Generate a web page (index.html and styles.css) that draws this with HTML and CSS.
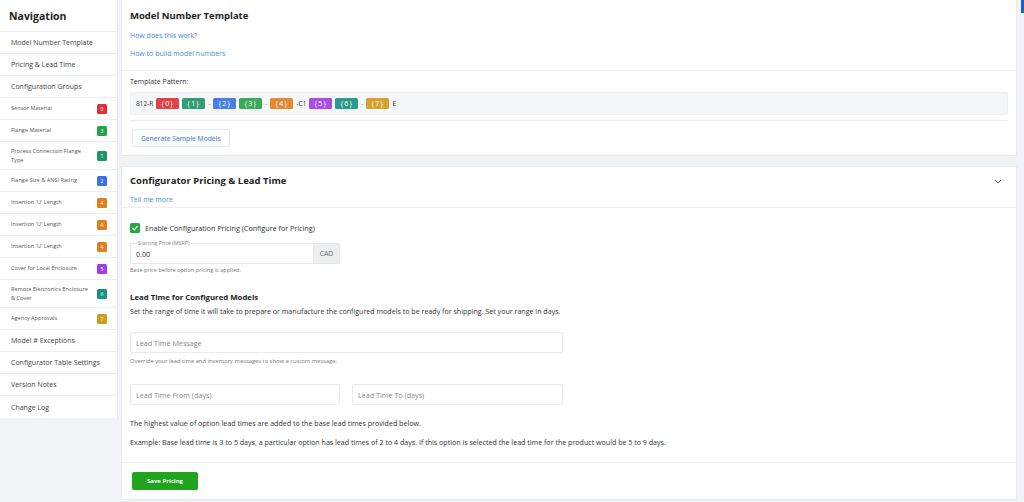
FILE: index.html
```html
<!DOCTYPE html>
<html>
<head>
<meta charset="utf-8">
<link rel="stylesheet" href="styles.css">
</head>
<body>
<div class="page">
  <aside class="sidebar">
    <div class="nav-title">Navigation</div>
    <div class="nav-item">Model Number Template</div>
    <div class="nav-item">Pricing &amp; Lead Time</div>
    <div class="nav-item">Configuration Groups</div>
    <div class="nav-sub"><span>Sensor Material</span><span class="badge red">0</span></div>
    <div class="nav-sub"><span>Flange Material</span><span class="badge green">3</span></div>
    <div class="nav-sub tall"><span>Process Connection Flange Type</span><span class="badge dgreen">1</span></div>
    <div class="nav-sub"><span>Flange Size &amp; ANSI Rating</span><span class="badge blue">2</span></div>
    <div class="nav-sub"><span>Insertion 'U' Length</span><span class="badge orange">4</span></div>
    <div class="nav-sub"><span>Insertion 'U' Length</span><span class="badge orange">4</span></div>
    <div class="nav-sub"><span>Insertion 'U' Length</span><span class="badge orange">4</span></div>
    <div class="nav-sub"><span>Cover for Local Enclosure</span><span class="badge purple">5</span></div>
    <div class="nav-sub tall"><span>Remote Electronics Enclosure &amp; Cover</span><span class="badge teal">6</span></div>
    <div class="nav-sub"><span>Agency Approvals</span><span class="badge gold">7</span></div>
    <div class="nav-item">Model # Exceptions</div>
    <div class="nav-item">Configurator Table Settings</div>
    <div class="nav-item">Version Notes</div>
    <div class="nav-item last">Change Log</div>
  </aside>

  <main class="main">
    <section class="card">
      <div class="card-head">
        <h2 class="card-title">Model Number Template</h2>
        <div class="links">
          <a class="link">How does this work?</a>
          <a class="link">How to build model numbers</a>
        </div>
      </div>
      <div class="card-body">
        <div class="label">Template Pattern:</div>
        <div class="pattern">
          <span class="lit">812-R</span>
          <span class="chip red">{0}</span>
          <span class="chip dgreen">{1}</span>
          <span class="dash">-</span>
          <span class="chip blue">{2}</span>
          <span class="chip green">{3}</span>
          <span class="dash">-</span>
          <span class="chip orange">{4}</span>
          <span class="lit">-C1</span>
          <span class="chip purple">{5}</span>
          <span class="chip teal">{6}</span>
          <span class="dash">-</span>
          <span class="chip gold">{7}</span>
          <span class="lit">E</span>
        </div>
        <div class="rule"></div>
        <div class="btn-row"><button class="btn-outline">Generate Sample Models</button></div>
      </div>
    </section>

    <section class="card">
      <div class="card-head head2">
        <div class="title-row">
          <h2 class="card-title">Configurator Pricing &amp; Lead Time</h2>
          <svg class="chev" width="8" height="5" viewBox="0 0 8 5"><path d="M1 1 L4 4 L7 1" fill="none" stroke="#555" stroke-width="1"/></svg>
        </div>
        <a class="link tell">Tell me more</a>
      </div>
      <div class="card-body body2">
        <label class="check-row">
          <span class="checkbox"><svg width="8" height="8" viewBox="0 0 8 8"><path d="M1.5 4.2 L3.2 5.9 L6.6 2.2" fill="none" stroke="#fff" stroke-width="1.2"/></svg></span>
          <span>Enable Configuration Pricing (Configure for Pricing)</span>
        </label>
        <div class="price-group">
          <div class="price-input">
            <span class="float-label">Starting Price (MSRP)</span>
            <span class="price-val">0.00</span>
          </div>
          <div class="addon">CAD</div>
        </div>
        <div class="help">Base price before option pricing is applied.</div>

        <h3 class="sub-title">Lead Time for Configured Models</h3>
        <p class="text desc">Set the range of time it will take to prepare or manufacture the configured models to be ready for shipping. Set your range in days.</p>

        <div class="field wide">Lead Time Message</div>
        <div class="help help2">Override your lead time and inventory messages to show a custom message.</div>

        <div class="two-fields">
          <div class="field">Lead Time From (days)</div>
          <div class="field">Lead Time To (days)</div>
        </div>

        <p class="text note1">The highest value of option lead times are added to the base lead times provided below.</p>
        <p class="text note2">Example: Base lead time is 3 to 5 days, a particular option has lead times of 2 to 4 days. If this option is selected the lead time for the product would be 5 to 9 days.</p>
      </div>
      <div class="card-foot">
        <button class="btn-green">Save Pricing</button>
      </div>
    </section>
  </main>
  <div class="scroll-thumb"></div>
</div>
</body>
</html>
```

FILE: styles.css
```css
* { box-sizing: border-box; }
html, body { margin: 0; padding: 0; }
body {
  background: #f1f3f6;
  font-family: "Open Sans", "Liberation Sans", sans-serif;
  color: #333;
  width: 1024px;
  height: 502px;
  overflow: hidden;
}
.page {
  display: flex;
  align-items: flex-start;
  gap: 3px;
  padding-right: 7px;
  position: relative;
  height: 502px;
}

/* Sidebar */
.sidebar {
  width: 118px;
  flex: 0 0 118px;
  background: #fff;
  border-right: 1px solid #e9ecef;
}
.nav-title {
  height: 32px;
  padding: 0 9px;
  display: flex;
  align-items: center;
  font-weight: 700;
  font-size: 10.5px;
  color: #222;
  border-bottom: 1px solid #eceef0;
}
.nav-item {
  height: 22px;
  padding: 0 11px;
  display: flex;
  align-items: center;
  font-size: 7px;
  color: #444;
  border-bottom: 1px solid #eceef0;
  white-space: nowrap;
}
.nav-item.last { border-bottom: none; }
.nav-sub {
  min-height: 22px;
  padding: 0 10px 0 11px;
  display: flex;
  align-items: center;
  justify-content: space-between;
  font-size: 5.6px;
  color: #555;
  border-bottom: 1px solid #eceef0;
}
.nav-sub span:first-child { line-height: 9px; padding-right: 4px; }
.nav-sub.tall { min-height: 28px; }
.badge {
  flex: 0 0 10px;
  width: 10px;
  height: 10px;
  border-radius: 1.5px;
  color: #fff;
  font-size: 5px;
  display: flex;
  align-items: center;
  justify-content: center;
}
.red { background: #dc3038; }
.green { background: #28a14a; }
.dgreen { background: #1f946b; }
.blue { background: #3574e3; }
.orange { background: #e07f1f; }
.purple { background: #a03ee0; }
.teal { background: #15917f; }
.gold { background: #d29a1c; }

/* Main */
.main {
  flex: 1;
  display: flex;
  flex-direction: column;
  gap: 10px;
}
.card {
  background: #fff;
  border: 1px solid #e8eaed;
  border-top: none;
}
.card + .card { border-top: 1px solid #e8eaed; }
.card-head {
  padding: 8px 8px 7px;
  border-bottom: 1px solid #eceef0;
}
.card-title {
  margin: 0;
  font-size: 9.5px;
  line-height: 16px;
  font-weight: 700;
  color: #222;
}
.links {
  margin-top: 3px;
  display: flex;
  flex-direction: column;
}
.link {
  color: #4b8ed3;
  font-size: 7px;
  line-height: 18px;
}
.card-body { padding: 7px 8px 8px; }
.label {
  font-size: 7px;
  line-height: 8px;
  color: #333;
}
.pattern {
  margin-top: 6px;
  height: 23px;
  background: #f4f6f8;
  border: 1px solid #eef0f2;
  border-radius: 2px;
  display: flex;
  align-items: center;
  padding: 0 5px;
  gap: 3px;
  font-size: 6.5px;
}
.lit { color: #333; }
.dash { color: #888; }
.chip {
  color: #fff;
  height: 11px;
  width: 23px;
  border-radius: 1.5px;
  display: inline-flex;
  align-items: center;
  justify-content: center;
  font-size: 7px;
  letter-spacing: 1.2px;
  opacity: 0.9;
}
.rule {
  margin-top: 5px;
  border-top: 1px solid #eceef0;
}
.btn-row { display: flex; margin-top: 8px; }
.btn-outline {
  margin-left: 2px;
  height: 18px;
  padding: 0 8px;
  background: #fff;
  border: 1px solid #e3e6ea;
  border-radius: 2px;
  color: #5d93cf;
  font-family: inherit;
  font-size: 6.6px;
  font-weight: 600;
}

.title-row {
  display: flex;
  justify-content: space-between;
  align-items: center;
}
.head2 { padding-top: 6px; padding-bottom: 2px; }
.chev { margin-right: 6px; }
.tell { display: block; line-height: 10px; margin-top: 6px; }

.body2 { padding: 15px 8px 15px; }
.check-row {
  display: flex;
  align-items: center;
  gap: 5px;
  font-size: 7.2px;
  height: 10px;
  color: #333;
}
.checkbox {
  width: 10px;
  height: 10px;
  background: #28a745;
  border-radius: 1.5px;
  display: flex;
  align-items: center;
  justify-content: center;
}
.price-group {
  margin-top: 10px;
  width: 210px;
  height: 21px;
  display: flex;
}
.price-input {
  flex: 1;
  position: relative;
  border: 1px solid #e6e8eb;
  border-right: none;
  border-radius: 2px 0 0 2px;
  display: flex;
  align-items: center;
  padding-left: 5px;
}
.float-label {
  position: absolute;
  top: -4px;
  left: 5px;
  background: #fff;
  padding: 0 2px;
  font-size: 5.3px;
  line-height: 6px;
  color: #888;
}
.price-val { font-size: 7.2px; color: #333; }
.addon {
  width: 27px;
  background: #eceef0;
  border: 1px solid #e3e5e8;
  border-radius: 0 2px 2px 0;
  font-size: 6.8px;
  color: #666;
  display: flex;
  align-items: center;
  justify-content: center;
}
.help {
  margin-top: 2px;
  font-size: 5.6px;
  line-height: 8px;
  color: #777;
}
.sub-title {
  margin: 18px 0 0;
  font-size: 7.8px;
  line-height: 10px;
  font-weight: 700;
  color: #222;
}
.text {
  margin: 0;
  font-size: 7.1px;
  line-height: 10px;
  color: #333;
}
.desc { margin-top: 4px; }
.field {
  height: 21px;
  border: 1px solid #e8eaed;
  border-radius: 2px;
  display: flex;
  align-items: center;
  padding-left: 5px;
  font-size: 7.2px;
  color: #888;
}
.field.wide { width: 433px; margin-top: 16px; }
.help2 { margin-top: 4px; font-size: 5.8px; }
.two-fields {
  margin-top: 19px;
  width: 433px;
  display: grid;
  grid-template-columns: 210px 211px;
  gap: 12px;
}
.note1 { margin-top: 13px; }
.note2 { margin-top: 9px; }
.card-foot {
  border-top: 1px solid #eceef0;
  padding: 9px 10px 9px;
  display: flex;
}
.btn-green {
  height: 18px;
  width: 66px;
  background: #20a41e;
  border: none;
  border-radius: 2px;
  color: #fff;
  font-family: inherit;
  font-size: 6px;
  font-weight: 700;
}
.scroll-thumb {
  position: absolute;
  top: 0;
  right: 0;
  width: 3px;
  height: 13px;
  background: #1d5fd6;
}
```
